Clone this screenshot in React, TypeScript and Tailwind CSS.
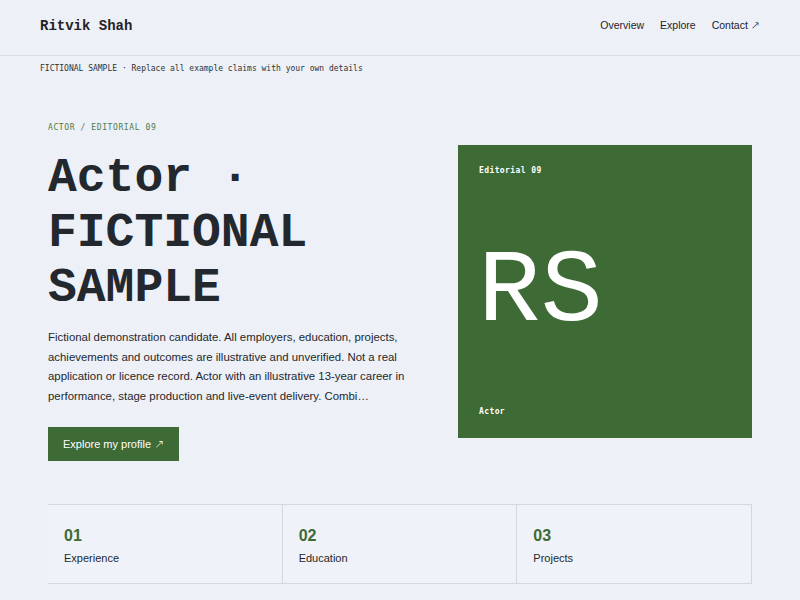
import { ReactNode } from 'react'

const mono = "font-['DejaVu_Sans_Mono','Menlo',monospace]"
const typewriter = "font-['Courier','Nimbus_Mono_PS','FreeMono','Courier_New','Liberation_Mono',monospace]"
const sans = "font-['Liberation_Sans','Helvetica','Arial',sans-serif]"

function NavLink({ children }: { children: ReactNode }) {
  return <a className="text-[10.5px] text-[#1f2328] leading-none">{children}</a>
}

const sections = [
  { num: '01', label: 'Experience' },
  { num: '02', label: 'Education' },
  { num: '03', label: 'Projects' },
]

export default function App() {
  return (
    <div className={`min-h-[600px] w-full bg-[#edf0f6] ${sans}`}>
      {/* Header */}
      <header className="h-14 flex items-center justify-between px-10 pb-[3px] border-b border-[#d8dbe1]">
        <span className={`${typewriter} font-bold text-[14px] text-[#1f2328] mt-[1px]`}>Ritvik Shah</span>
        <nav className="flex items-center gap-4 -mt-[1px]">
          <NavLink>Overview</NavLink>
          <NavLink>Explore</NavLink>
          <NavLink>
            Contact <span className="font-['DejaVu_Sans',sans-serif] text-[11px] font-light">↗</span>
          </NavLink>
        </nav>
      </header>

      {/* Notice */}
      <div className={`px-10 pt-[7px] ${mono} text-[8px] leading-[12px] text-[#2f3338]`}>
        FICTIONAL SAMPLE · Replace all example claims with your own details
      </div>

      <main className="px-12 pt-[47px]">
        {/* Hero */}
        <section className="grid grid-cols-[1fr_294px] gap-12 items-center">
          <div>
            <p className={`${mono} text-[8px] leading-[12px] tracking-[0.6px] text-[#4f7d47]`}>
              ACTOR / EDITORIAL 09
            </p>
            <h1 className={`${typewriter} font-bold text-[48px] leading-[55px] text-[#23282f] mt-[17px]`}>
              Actor · FICTIONAL SAMPLE
            </h1>
            <p className="mt-3 text-[11.4px] leading-[19.5px] text-[#24282d]">
              Fictional demonstration candidate. All employers, education, projects, achievements and outcomes
              are illustrative and unverified. Not a real application or licence record. Actor with an
              illustrative 13-year career in performance, stage production and live-event delivery. Combi…
            </p>
            <button className="mt-[21px] h-[34px] px-[15px] bg-[#3d6a35] text-white text-[11px] flex items-center gap-[3px]">
              Explore my profile <span className="font-['DejaVu_Sans',sans-serif] text-[12px] font-light">↗</span>
            </button>
          </div>

          {/* Monogram card */}
          <div className="h-[293px] bg-[#3e6a35] flex flex-col justify-between px-[21px] py-[21px]">
            <span className={`${mono} font-bold text-[8px] leading-[10px] tracking-[0.4px] text-white`}>
              Editorial 09
            </span>
            <span className={`${typewriter} text-[104px] leading-none text-white -ml-[1px]`}>RS</span>
            <span className={`${mono} font-bold text-[8px] leading-[10px] tracking-[0.4px] text-white`}>
              Actor
            </span>
          </div>
        </section>

        {/* Index */}
        <section className="mt-[43px] h-[80px] grid grid-cols-3 border-y border-[#d4d8de]">
          {sections.map((s) => (
            <div key={s.num} className="border-r border-[#d4d8de] bg-[#eff2f8] px-4 pt-[21px]">
              <div className="text-[16px] leading-[20px] font-bold text-[#3d6a35]">{s.num}</div>
              <div className="mt-[5px] text-[11px] leading-[14px] text-[#24282d]">{s.label}</div>
            </div>
          ))}
        </section>
      </main>
    </div>
  )
}
